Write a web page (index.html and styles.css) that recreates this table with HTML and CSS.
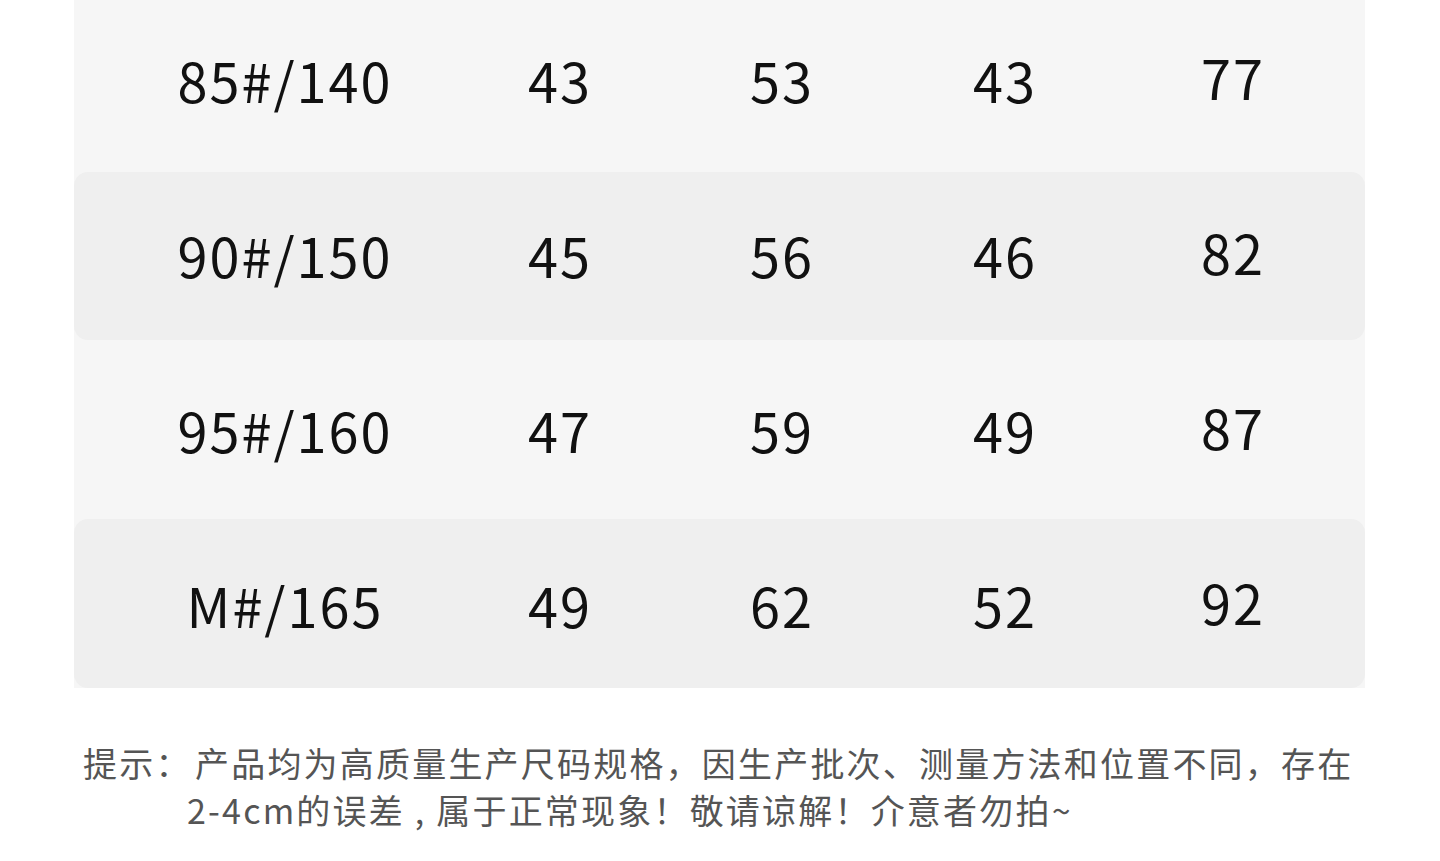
FILE: index.html
```html
<!DOCTYPE html>
<html lang="zh">
<head>
<meta charset="utf-8">
<title>尺码表</title>
<link rel="stylesheet" href="styles.css">
</head>
<body>
<div class="page">
  <div class="table">
    <div class="row r1">
      <div class="cell">85#/140</div><div class="cell">43</div><div class="cell">53</div><div class="cell">43</div><div class="cell last">77</div>
    </div>
    <div class="row alt r2">
      <div class="cell">90#/150</div><div class="cell">45</div><div class="cell">56</div><div class="cell">46</div><div class="cell last">82</div>
    </div>
    <div class="row r3">
      <div class="cell">95#/160</div><div class="cell">47</div><div class="cell">59</div><div class="cell">49</div><div class="cell last">87</div>
    </div>
    <div class="row alt r4">
      <div class="cell">M#/165</div><div class="cell">49</div><div class="cell">62</div><div class="cell">52</div><div class="cell last">92</div>
    </div>
  </div>
  <div class="note">
    <span class="label">提示：</span><span class="text">产品均为高质量生产尺码规格，因生产批次、测量方法和位置不同，存在2-4cm的误差 , 属于正常现象！敬请谅解！介意者勿拍~</span>
  </div>
</div>
</body>
</html>
```
FILE: styles.css
```css
html, body {
  margin: 0;
  padding: 0;
  background: #ffffff;
}
body {
  font-family: "Noto Sans CJK SC", "Noto Sans", sans-serif;
  overflow: hidden;
}
.page {
  width: 1440px;
  height: 861px;
}
.table {
  margin-left: 74px;
  width: 1291px;
  margin-top: -4px;
  background: #f6f6f6;
  display: flex;
  flex-direction: column;
}
.row {
  display: grid;
  grid-template-columns: 422px 128px 316px 130px 295px;
  align-items: center;
  box-sizing: border-box;
  border-radius: 14px;
  color: #111111;
  font-size: 54px;
  line-height: 1;
}
.row.alt {
  background: #efefef;
}
.r1 {
  height: 176px;
  padding-bottom: 8px;
}
.r2 {
  height: 168px;
  padding-bottom: 2px;
}
.r3 {
  height: 179px;
  padding-top: 1px;
}
.r4 {
  height: 169px;
  padding-top: 3px;
}
.cell {
  text-align: center;
  white-space: nowrap;
  letter-spacing: 2px;
}
.cell.last {
  padding-left: 31px;
  padding-bottom: 6px;
}
.note {
  display: flex;
  margin-top: 51px;
  padding-left: 83px;
  width: 1290px;
  font-size: 34px;
  line-height: 47px;
  color: #555555;
  letter-spacing: 2.2px;
}
.label {
  flex: none;
  width: 104px;
  white-space: nowrap;
}
.text {
  flex: 1;
  text-indent: 8px;
}
```
